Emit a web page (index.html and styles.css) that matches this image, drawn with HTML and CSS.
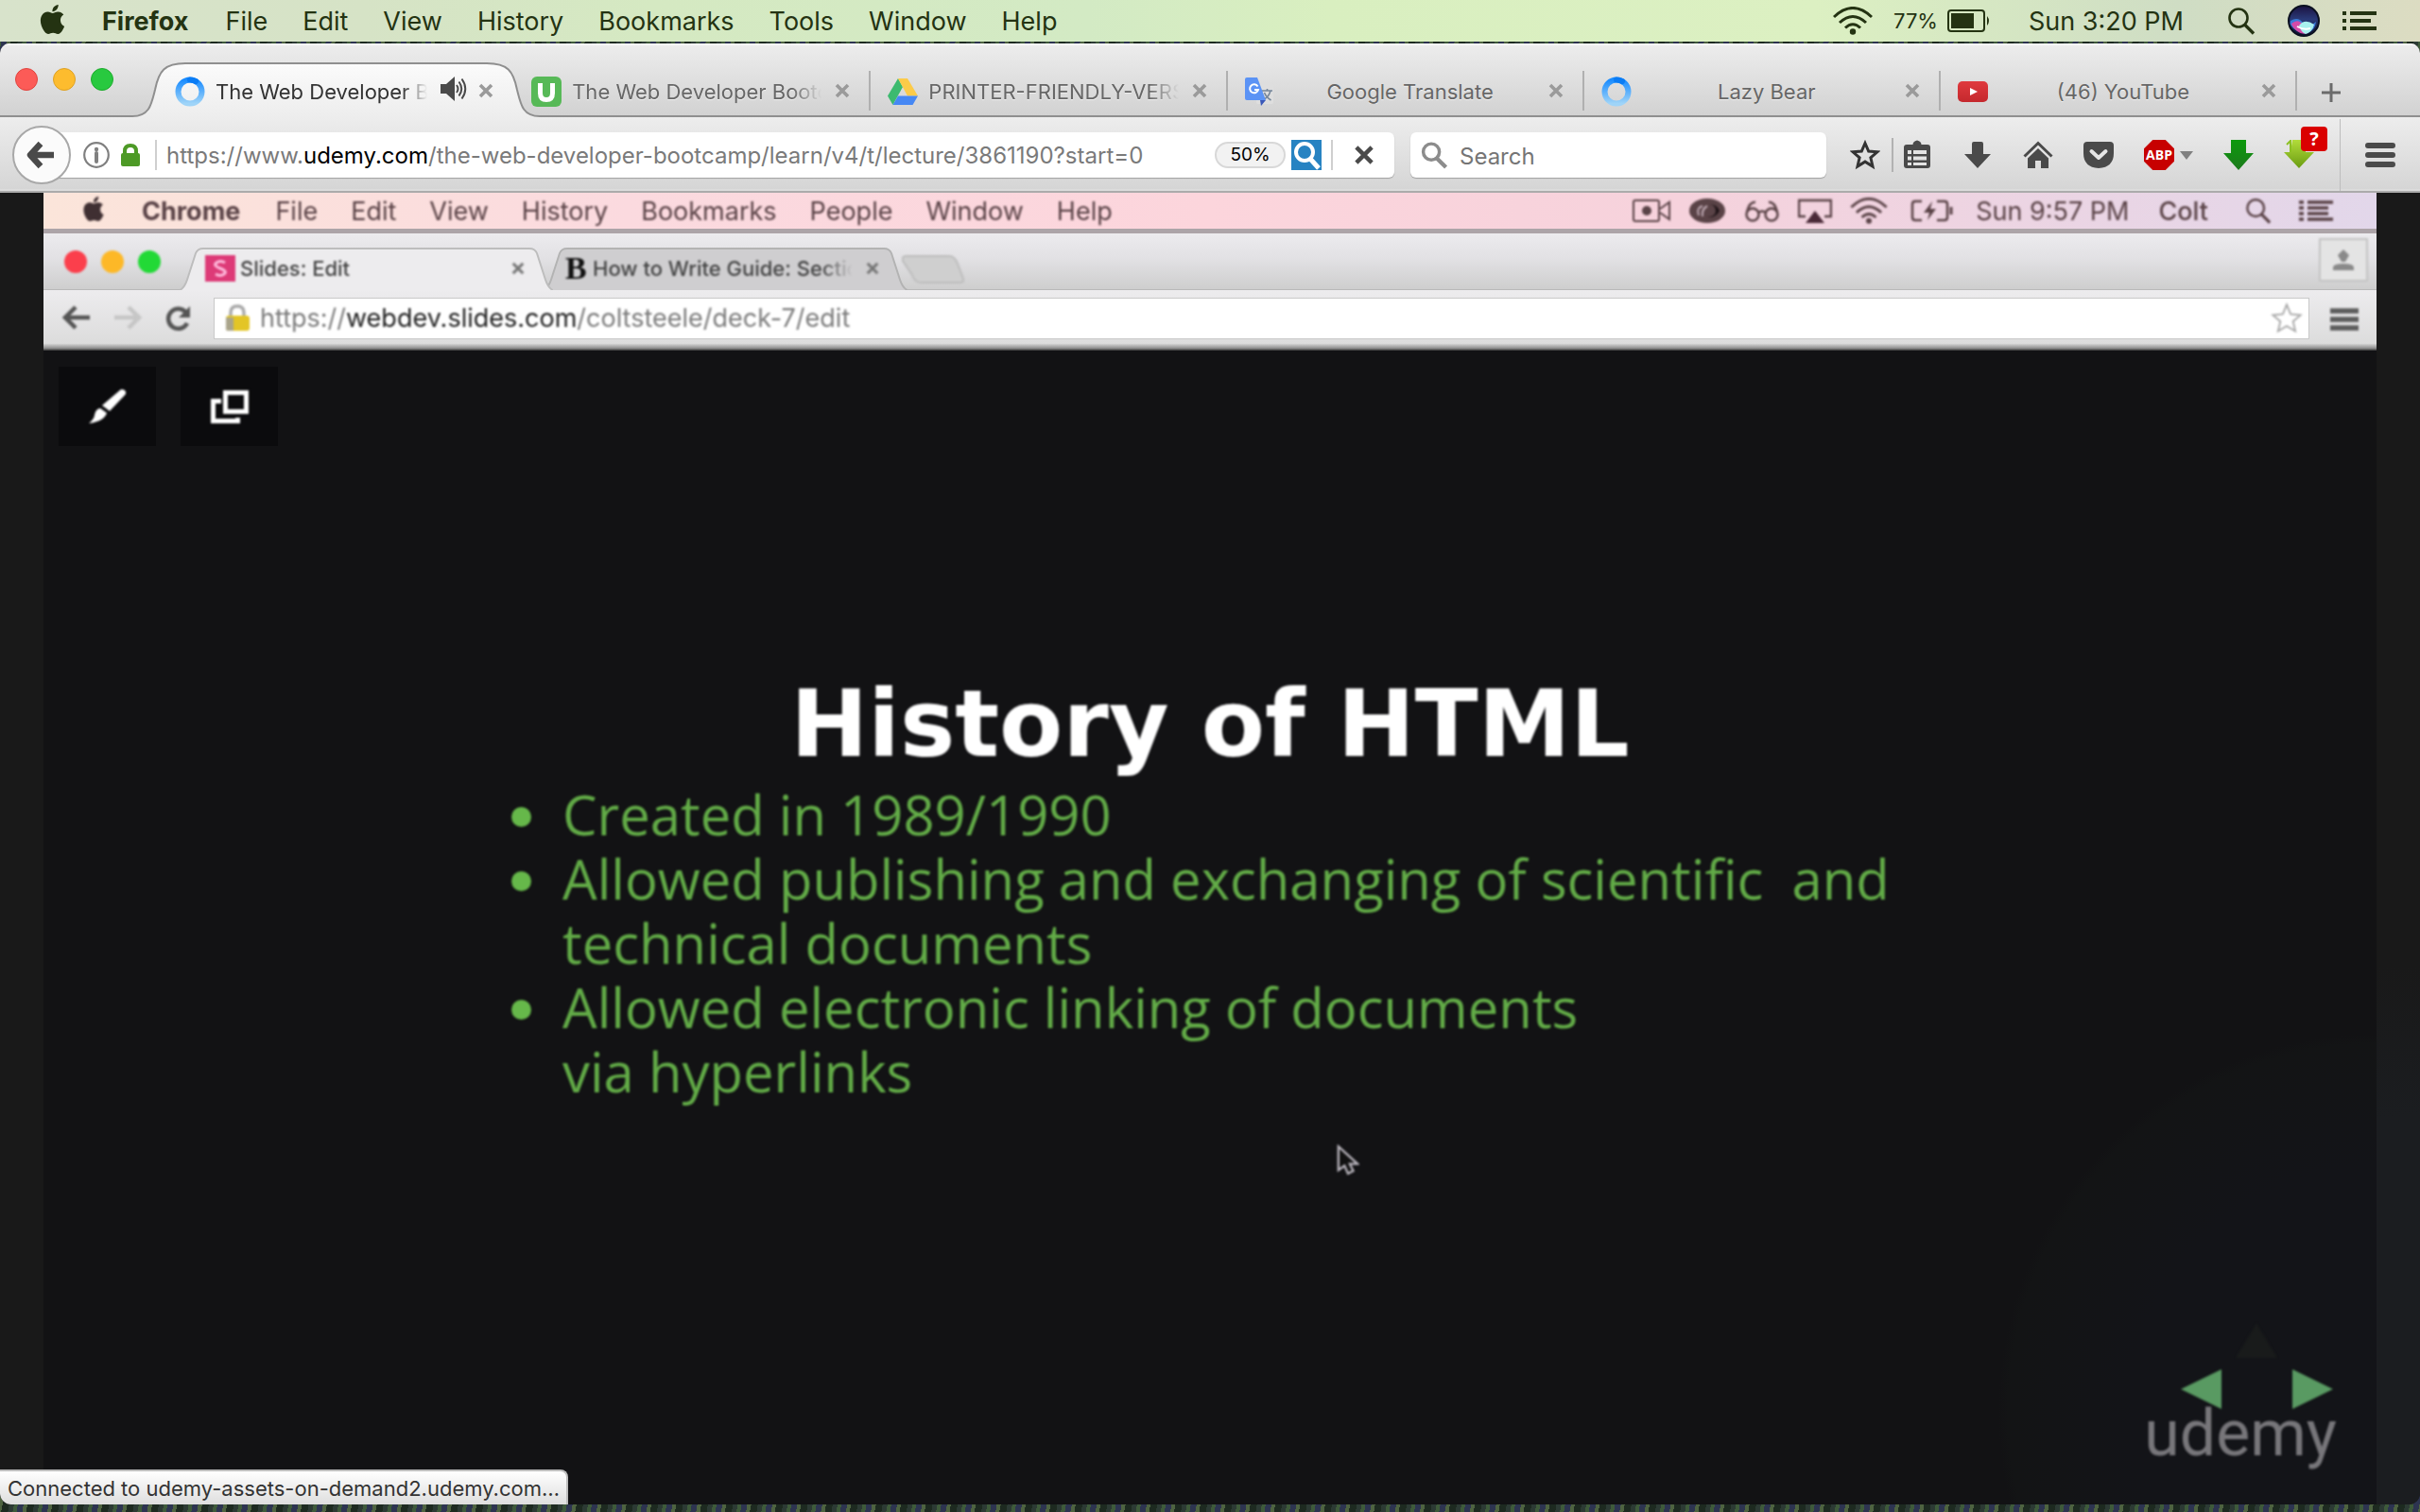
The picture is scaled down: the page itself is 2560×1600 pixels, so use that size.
FILE: index.html
```
<!DOCTYPE html>
<html lang="en">
<head>
<meta charset="utf-8">
<title>The Web Developer Bootcamp</title>
<link rel="stylesheet" href="styles.css">
</head>
<body>
<svg class="defs" width="0" height="0" aria-hidden="true">
  <defs>
    <linearGradient id="spin" x1="0" y1="0" x2="0" y2="1"><stop offset="0" stop-color="#1a8cff"/><stop offset="1" stop-color="#9fd4f8"/></linearGradient>
    <linearGradient id="lime" x1="0" y1="0" x2="0" y2="1"><stop offset="0" stop-color="#b2dc3a"/><stop offset="1" stop-color="#6a9c12"/></linearGradient>
    <linearGradient id="green" x1="0" y1="0" x2="0" y2="1"><stop offset="0" stop-color="#0c9a0c"/><stop offset="1" stop-color="#1d7a1d"/></linearGradient>
    <linearGradient id="siri" x1="0" y1="0" x2="0" y2="1"><stop offset="0" stop-color="#1b1240"/><stop offset=".45" stop-color="#2a3a78"/><stop offset="1" stop-color="#0b1230"/></linearGradient>
    <linearGradient id="tabfill" x1="0" y1="0" x2="0" y2="1"><stop offset="0" stop-color="#fbfbfb"/><stop offset="1" stop-color="#ededed"/></linearGradient>
    <linearGradient id="youtube" x1="0" y1="0" x2="0" y2="1"><stop offset="0" stop-color="#e03a3e"/><stop offset="1" stop-color="#c4282d"/></linearGradient>
    <symbol id="apple" viewBox="0 0 24 24"><path fill="currentColor" d="M12.152 6.896c-.948 0-2.415-1.078-3.96-1.04-2.04.027-3.91 1.183-4.961 3.014-2.117 3.675-.546 9.103 1.519 12.09 1.013 1.454 2.208 3.09 3.792 3.039 1.52-.065 2.09-.987 3.935-.987 1.831 0 2.35.987 3.96.948 1.637-.026 2.676-1.48 3.676-2.948 1.156-1.688 1.636-3.325 1.662-3.415-.039-.013-3.182-1.221-3.22-4.857-.026-3.04 2.48-4.494 2.597-4.559-1.429-2.09-3.623-2.324-4.39-2.376-2-.156-3.675 1.09-4.61 1.09zM15.53 3.83c.843-1.012 1.4-2.427 1.245-3.83-1.207.052-2.662.805-3.532 1.818-.78.896-1.454 2.338-1.273 3.714 1.338.104 2.715-.688 3.559-1.701"/></symbol>
    <symbol id="wifi" viewBox="0 0 42 30"><g fill="none" stroke="currentColor" stroke-width="3"><path d="M1 11Q21-8 41 11"/><path d="M7 17Q21 4 35 17"/><path d="M13 22.500Q21 15 29 22.500"/></g><circle cx="21" cy="26.500" r="3.200" fill="currentColor"/></symbol>
    <symbol id="search" viewBox="0 0 30 30"><circle cx="12" cy="12" r="9.500" fill="none" stroke="currentColor" stroke-width="2.600"/><path d="M18.500 19l9.500 9.500" stroke="currentColor" stroke-width="3.400"/></symbol>
    <symbol id="close" viewBox="0 0 16 16"><path d="M2 2l12 12M14 2L2 14" stroke="currentColor" stroke-width="3.600" fill="none"/></symbol>
    <symbol id="spinner" viewBox="0 0 32 32"><circle cx="16" cy="16" r="12.500" fill="none" stroke="url(#spin)" stroke-width="6"/><path d="M16 3.500a12.500 12.500 0 0 1 6 1.500" fill="none" stroke="#0a7cf5" stroke-width="6" stroke-linecap="round"/></symbol>
    <symbol id="star" viewBox="0 0 32 32"><path d="M16 3.500l3.700 8.500 9.200.8-7 6 2.100 9.200-8-4.900-8 4.900 2.100-9.200-7-6 9.200-.8z" fill="none" stroke="currentColor" stroke-width="3" stroke-linejoin="miter"/></symbol>
  </defs>
</svg>

<header class="menubar">
  <nav class="menus" aria-label="Application menu">
    <button class="menu logo" aria-label="Apple menu"><svg width="31" height="31"><use href="#apple"/></svg></button>
    <button class="menu app">Firefox</button>
    <button class="menu">File</button>
    <button class="menu">Edit</button>
    <button class="menu">View</button>
    <button class="menu">History</button>
    <button class="menu">Bookmarks</button>
    <button class="menu">Tools</button>
    <button class="menu">Window</button>
    <button class="menu">Help</button>
  </nav>
  <div class="status-items">
    <svg width="42" height="30"><use href="#wifi"/></svg>
    <span class="battery">77%
      <svg width="46" height="24" viewBox="0 0 46 24"><rect x="1" y="1" width="38" height="22" rx="3" fill="none" stroke="currentColor" stroke-width="2"/><rect x="4" y="4" width="24" height="16" fill="currentColor"/><path d="M42 7q4 5 0 10z" fill="currentColor"/></svg>
    </span>
    <time class="clock">Sun 3:20 PM</time>
    <svg class="spotlight" width="30" height="30"><use href="#search"/></svg>
    <svg class="siri" width="34" height="34" viewBox="0 0 34 34"><circle cx="17" cy="17" r="16" fill="url(#siri)" stroke="#0b1020" stroke-width="2"/><path d="M3 17q8-5 13 2t14-1q-1 8-7 11T9 27 3 17z" fill="#3a7ad8"/><path d="M4 20q7-6 12 1t5 9q-6 2-11-2t-6-8z" fill="#d44aa8"/><path d="M12 22q6-8 16-1-2 8-9 10-5-2-7-9z" fill="#a8f0ee"/><path d="M10 23q7 4 14 2" stroke="#fff" stroke-width="2" fill="none"/></svg>
    <svg width="36" height="22" viewBox="0 0 36 22"><path d="M8 3h28M8 11h22M8 19h28M0 3h4M0 11h4M0 19h4" stroke="currentColor" stroke-width="4"/></svg>
  </div>
</header>

<main class="window">
  <div class="tabstrip">
    <div class="lights"><button class="light red" aria-label="Close window"></button><button class="light amber" aria-label="Minimise"></button><button class="light lime" aria-label="Zoom"></button></div>
    <div class="tabs" role="tablist">
      <div class="tab active" role="tab" aria-selected="true">
        <div class="tab-shape">
          <svg width="56" height="58" viewBox="0 0 56 58"><path d="M0 58V57C18 57 20 45 24 29 28 9 34 1 56 1V58z" fill="url(#tabfill)"/><path d="M0 57C18 57 20 45 24 29 28 9 34 1 56 1" fill="none" stroke="#8f8f8f" stroke-width="2"/></svg>
          <div class="tab-mid"></div>
          <svg width="56" height="58" viewBox="0 0 56 58"><path d="M56 58V57C38 57 36 45 32 29 28 9 22 1 0 1V58z" fill="url(#tabfill)"/><path d="M56 57C38 57 36 45 32 29 28 9 22 1 0 1" fill="none" stroke="#8f8f8f" stroke-width="2"/></svg>
        </div>
        <svg class="favicon" width="32" height="32"><use href="#spinner"/></svg>
        <span class="tab-title fade">The Web Developer Bootcamp</span>
        <svg class="sound" width="28" height="26" viewBox="0 0 28 26"><path d="M0 8h6l9-8v26l-9-8H0z" fill="#4a4a4a"/><path d="M17 9q3 4 0 8M19.500 5.500q5.500 7.500 0 15M22.500 2.500q7.500 10.500 0 21" fill="none" stroke="#4a4a4a" stroke-width="2"/></svg>
        <button class="tab-close" aria-label="Close tab"><svg width="16" height="16"><use href="#close"/></svg></button>
      </div>
      <div class="tab" role="tab">
        <svg class="favicon" width="32" height="32" viewBox="0 0 32 32"><rect width="32" height="32" rx="6" fill="#57b957"/><path d="M9.500 7v10.500q0 7 6.500 7t6.500-7V7" fill="none" stroke="#fff" stroke-width="5"/></svg>
        <span class="tab-title fade">The Web Developer Bootcamp</span>
        <button class="tab-close" aria-label="Close tab"><svg width="16" height="16"><use href="#close"/></svg></button>
      </div>
      <div class="tab" role="tab">
        <svg class="favicon" width="32" height="32" viewBox="0 0 32 32"><path d="M11 2L0 20.500 5.500 30 16 11z" fill="#3cba6f"/><path d="M11 2h10l11 18.500H21z" fill="#fccb49"/><path d="M5.500 30L11 20.500h21L26.500 30z" fill="#4688f4"/></svg>
        <span class="tab-title fade">PRINTER-FRIENDLY-VERSION</span>
        <button class="tab-close" aria-label="Close tab"><svg width="16" height="16"><use href="#close"/></svg></button>
      </div>
      <div class="tab" role="tab">
        <svg class="favicon" width="32" height="32" viewBox="0 0 32 32"><rect x="12" y="7" width="18" height="22" rx="2" fill="#dedede"/><path d="M18 15h11M23.500 13v2M27 15q-2 7-7 9M20.500 17q2 5 7 8" stroke="#75869a" stroke-width="1.600" fill="none"/><path d="M16 25h6l-5 6z" fill="#3a58b8"/><path d="M2 1h11l9 24H2q-2 0-2-2V3q0-2 2-2z" fill="#5b93f5"/><path d="M13.500 10.500A4.500 4.500 0 1 0 14 14H10" fill="none" stroke="#fff" stroke-width="2"/></svg>
        <span class="tab-title">Google Translate</span>
        <button class="tab-close" aria-label="Close tab"><svg width="16" height="16"><use href="#close"/></svg></button>
      </div>
      <div class="tab" role="tab">
        <svg class="favicon" width="32" height="32"><use href="#spinner"/></svg>
        <span class="tab-title">Lazy Bear</span>
        <button class="tab-close" aria-label="Close tab"><svg width="16" height="16"><use href="#close"/></svg></button>
      </div>
      <div class="tab" role="tab">
        <svg class="favicon" width="32" height="32" viewBox="0 0 32 32"><rect y="5" width="32" height="22" rx="5" fill="url(#youtube)"/><path d="M13 12l8 4-8 4z" fill="#fff"/></svg>
        <span class="tab-title">(46) YouTube</span>
        <button class="tab-close" aria-label="Close tab"><svg width="16" height="16"><use href="#close"/></svg></button>
      </div>
    </div>
    <button class="new-tab" aria-label="New tab"><svg width="20" height="20" viewBox="0 0 20 20"><path d="M10 0v20M0 10h20" stroke="#6b6b6b" stroke-width="3"/></svg></button>
  </div>

  <div class="toolbar">
    <button class="back" aria-label="Back"><svg width="32" height="32" viewBox="0 0 32 32"><path d="M15 4L4 16l11 12M5 16h24" fill="none" stroke="#4a4a4a" stroke-width="6.500" stroke-linejoin="round" stroke-linecap="butt"/></svg></button>
    <div class="urlbar">
      <svg width="28" height="28" viewBox="0 0 28 28"><circle cx="14" cy="14" r="12.800" fill="none" stroke="#808080" stroke-width="2.200"/><circle cx="14" cy="8" r="2.200" fill="#808080"/><path d="M14 12v9" stroke="#808080" stroke-width="4" stroke-linecap="round"/></svg>
      <svg class="lock" width="20" height="24" viewBox="0 0 20 24"><rect y="10" width="20" height="14" rx="2" fill="#4d9a26"/><path d="M4 12V8q0-6 6-6t6 6v4" fill="none" stroke="#4d9a26" stroke-width="4"/></svg>
      <div class="url" role="textbox" contenteditable="true" spellcheck="false" aria-label="Address">https://www.<b>udemy.com</b>/the-web-developer-bootcamp/learn/v4/t/lecture/3861190?start=0</div>
      <button class="zoom-level">50%</button>
      <svg width="32" height="32" viewBox="0 0 32 32"><rect width="32" height="32" fill="#2783c2"/><circle cx="14" cy="13" r="9" fill="none" stroke="#fff" stroke-width="4"/><path d="M20 20l9 10" stroke="#fff" stroke-width="5"/></svg>
      <button class="stop" aria-label="Stop"><svg width="20" height="20" viewBox="0 0 16 16"><path d="M1.500 1.500l13 13M14.500 1.500l-13 13" stroke="#4a4a4a" stroke-width="3.600"/></svg></button>
    </div>
    <label class="searchbox">
      <svg width="29" height="29" viewBox="0 0 30 30"><circle cx="11.500" cy="11" r="8.800" fill="none" stroke="#8c8c8c" stroke-width="3.600"/><path d="M17.500 18l10 10" stroke="#8c8c8c" stroke-width="4.400"/></svg>
      <input type="search" placeholder="Search" aria-label="Search">
    </label>
    <button class="tool star" aria-label="Bookmark this page"><svg width="32" height="32"><use href="#star"/></svg></button>
    <div class="tools">
      <button class="tool" aria-label="Bookmarks list"><svg width="32" height="32" viewBox="0 0 32 32"><path d="M5 5h6.500q0-3.500 4.500-4.500 4.500 1 4.500 4.500H27q3 0 3 3v19q0 3-3 3H5q-3 0-3-3V8q0-3 3-3z" fill="#4a4a4a"/><path d="M6 11h4v4H6zM12 11h14v4H12zM6 17.500h4v4H6zM12 17.500h14v4H12zM6 24h4v3H6zM12 24h14v3H12z" fill="#e4e4e4"/></svg></button>
      <button class="tool" aria-label="Downloads"><svg width="32" height="32" viewBox="0 0 32 32"><path d="M10 4q0-2 2-2h8q2 0 2 2v11h8L16 30 2 15h8z" fill="#4a4a4a"/></svg></button>
      <button class="tool" aria-label="Home"><svg width="32" height="32" viewBox="0 0 32 32"><path d="M1.500 17.500L16 3.500l14.500 14" fill="none" stroke="#4a4a4a" stroke-width="3"/><path d="M5 19.500L16 9l11 10.500V30h-8v-8h-6v8H5z" fill="#4a4a4a"/></svg></button>
      <button class="tool" aria-label="Pocket"><svg width="32" height="32" viewBox="0 0 32 32"><path d="M4 2h24q4 0 4 4v8q0 15-16 16Q0 29 0 14V6q0-4 4-4z" fill="#4a4a4a"/><path d="M8.500 12l7.500 7 7.500-7" fill="none" stroke="#e6e6e6" stroke-width="4" stroke-linecap="round" stroke-linejoin="round"/></svg></button>
      <button class="tool abp" aria-label="Adblock Plus"><span class="abp-sign">ABP</span><svg width="14" height="9" viewBox="0 0 14 9"><path d="M0 0h14L7 9z" fill="#808080"/></svg></button>
      <button class="tool" aria-label="Video download"><svg width="32" height="32" viewBox="0 0 32 32"><path d="M8 0h16v14h8L16 32 0 14h8z" fill="url(#green)"/></svg></button>
      <button class="tool badged" aria-label="Download helper"><svg width="32" height="32" viewBox="0 0 32 32"><path d="M9 0h14v13h9L16 30 0 13h7z" fill="url(#lime)"/><path d="M3 5l4-4v12" fill="none" stroke="#8cc024" stroke-width="2"/></svg><span class="badge">?</span></button>
    </div>
    <div class="burger-cell"><button class="tool" aria-label="Open menu"><svg width="32" height="26" viewBox="0 0 32 26"><path d="M3 3h26M3 13h26M3 23h26" stroke="#4a4a4a" stroke-width="6" stroke-linecap="round"/></svg></button></div>
  </div>

  <section class="page">
    <div class="recording">
      <div class="rec-menubar">
        <div class="rec-menus soft">
          <svg class="rec-apple" width="26" height="26"><use href="#apple"/></svg>
          <span class="rec-app">Chrome</span><span>File</span><span>Edit</span><span>View</span><span>History</span><span>Bookmarks</span><span>People</span><span>Window</span><span>Help</span>
        </div>
        <div class="rec-status soft">
          <svg width="40" height="24" viewBox="0 0 40 24"><rect x="1" y="1" width="27" height="22" rx="2" fill="none" stroke="currentColor" stroke-width="2"/><circle cx="15" cy="12" r="5" fill="currentColor"/><path d="M29 10l10-7v18l-10-7" fill="none" stroke="currentColor" stroke-width="2"/></svg>
          <svg width="40" height="28" viewBox="0 0 40 28"><ellipse cx="20" cy="14" rx="19" ry="13" fill="currentColor"/><path d="M11 19q-3-8 4-10M15 20q-1-8 5-11" fill="none" stroke="#bfaab4" stroke-width="2"/><path d="M20 21q9-1 9-7t-7-7q8 0 11 7-4 8-13 7z" fill="#1c1216"/></svg>
          <svg width="38" height="24" viewBox="0 0 38 24"><g fill="none" stroke="currentColor" stroke-width="2.500"><circle cx="9" cy="16" r="6.500"/><circle cx="29" cy="16" r="6.500"/><path d="M15 14q4-3 8 0M3 13Q6 2 12 3M35 13Q32 2 26 3"/></g></svg>
          <svg width="36" height="26" viewBox="0 0 36 26"><path d="M8 19H1V2h34v17h-7" fill="none" stroke="currentColor" stroke-width="2.500"/><path d="M8 26L18 13l10 13z" fill="#4a2a38"/></svg>
          <svg class="rec-wifi" width="40" height="28"><use href="#wifi"/></svg>
          <svg width="46" height="24" viewBox="0 0 46 24"><path d="M12 2H5q-3 0-3 3v14q0 3 3 3h7M28 2h8q3 0 3 3v14q0 3-3 3h-8" fill="none" stroke="currentColor" stroke-width="2.500"/><path d="M43 8v8" stroke="currentColor" stroke-width="3"/><path d="M23 2l-9 12h6l-2 8 9-12h-6z" fill="currentColor"/></svg>
          <span class="rec-time">Sun 9:57 PM</span><span class="rec-user">Colt</span>
          <svg width="28" height="28"><use href="#search"/></svg>
          <svg width="36" height="22" viewBox="0 0 36 22"><path d="M9 2h27M9 8h22M9 14h22M9 20h27M0 2h5M0 8h5M0 14h5M0 20h5" stroke="currentColor" stroke-width="3.500"/></svg>
        </div>
      </div>
      <div class="rec-tabstrip">
        <div class="rec-lights soft"><i class="light rec-red"></i><i class="light rec-amber"></i><i class="light rec-green"></i></div>
        <div class="rec-tab rec-active">
          <svg class="rec-shape" width="395" height="45" viewBox="0 0 395 45"><path d="M0 45Q5 43 8 34L17 6Q19 1 25 1H370Q376 1 378 6L387 34Q390 43 395 45" fill="#edecee" stroke="#bdbdbd" stroke-width="2"/></svg>
          <svg class="soft" width="32" height="28" viewBox="0 0 32 28"><rect width="32" height="28" fill="#dd3a77"/><path d="M21 8q-5-3-9 0t4 6 4 6-9 0" fill="none" stroke="#fbd" stroke-width="3"/></svg>
          <span class="rec-title soft">Slides: Edit</span>
          <svg class="rec-x soft" width="14" height="14"><use href="#close"/></svg>
        </div>
        <div class="rec-tab">
          <svg class="rec-shape" width="385" height="45" viewBox="0 0 385 45"><path d="M0 45Q5 43 8 34L17 6Q19 1 25 1H360Q366 1 368 6L377 34Q380 43 385 45" fill="#cfced0" stroke="#b3b3b3" stroke-width="2"/></svg>
          <span class="rec-b soft">B</span>
          <span class="rec-title fade soft">How to Write Guide: Section</span>
          <svg class="rec-x soft" width="14" height="14"><use href="#close"/></svg>
        </div>
        <svg class="rec-new soft" width="66" height="30" viewBox="0 0 66 30"><path d="M4 1h46q6 0 9 8l6 16q1 4-4 4H20q-6 0-9-8L1 6q-1-5 3-5z" fill="#cfcfcf" stroke="#bdbdbd" stroke-width="2"/></svg>
        <div class="rec-profile soft"><svg width="24" height="24" viewBox="0 0 24 24"><path d="M12 1l6 6-4 7h-4L6 7z" fill="#8a8a8a"/><path d="M1 23v-3q0-4 11-4t11 4v3z" fill="#8a8a8a"/></svg></div>
      </div>
      <div class="rec-toolbar">
        <div class="rec-nav soft">
          <svg width="30" height="26" viewBox="0 0 30 26"><path d="M14 2L3 13l11 11M3 13h26" fill="none" stroke="#555" stroke-width="4.500"/></svg>
          <svg width="30" height="26" viewBox="0 0 30 26"><path d="M16 2l11 11-11 11M27 13H1" fill="none" stroke="#c6c6c6" stroke-width="4.500"/></svg>
          <svg width="28" height="28" viewBox="0 0 28 28"><path d="M23 8A10.500 10.500 0 1 0 24 19" fill="none" stroke="#555" stroke-width="4.500"/><path d="M27 1v12H15z" fill="#555"/></svg>
        </div>
        <div class="rec-url">
          <svg class="soft" width="27" height="29" viewBox="0 0 27 29"><path d="M6 14V9q0-7 7-7t7 7v5" fill="none" stroke="#aaa" stroke-width="3.500"/><rect x="1" y="12" width="25" height="16" rx="3" fill="#e3c526"/><path d="M1 14h8v14H3q-2 0-2-2z" fill="#a9a48a"/></svg>
          <span class="rec-address soft">https://<b>webdev.slides.com</b>/coltsteele/deck-7/edit</span>
          <svg class="soft" width="36" height="36" viewBox="0 0 32 32"><path d="M16 3l3.700 9 9.300.8-7 6 2.100 9.200-8.100-4.900L7.900 28l2.100-9.200-7-6 9.300-.8z" fill="#fff" stroke="#a5a5a5" stroke-width="1.600"/></svg>
        </div>
        <svg class="soft" width="30" height="26" viewBox="0 0 30 26"><path d="M0 5h30M0 14h30M0 23h30" stroke="#5c5c5c" stroke-width="5.500"/></svg>
      </div>

      <article class="slide">
        <div class="slide-tools">
          <button class="slide-tool" aria-label="Style"><svg class="soft" width="42" height="38" viewBox="0 0 42 38"><path d="M35 1q6 0 5 5L23 24l-8-6z" fill="#fff"/><path d="M13 21l7 5q-3 9-19 11 6-5 6-9 1-6 6-7z" fill="#fff"/></svg></button>
          <button class="slide-tool" aria-label="Arrange"><svg class="soft" width="42" height="38" viewBox="0 0 42 38"><rect x="3.500" y="13.500" width="26" height="21" fill="#0b0b0d" stroke="#fff" stroke-width="5"/><rect x="12" y="1" width="30" height="30" fill="#0b0b0d"/><rect x="16.500" y="4.500" width="22" height="20" fill="#0b0b0d" stroke="#fff" stroke-width="5"/></svg></button>
        </div>
        <h1 class="slide-title soft">History of HTML</h1>
        <ul class="points soft">
          <li>Created in 1989/1990</li>
          <li>Allowed publishing and exchanging of scientific&nbsp; and technical documents</li>
          <li>Allowed electronic linking of documents<br>via hyperlinks</li>
        </ul>
        <svg class="cursor soft" width="24" height="34" viewBox="0 0 26 36"><path d="M2 2v27l7-5 4 9 6-3-4-8h9z" fill="#111" stroke="#b9b5bd" stroke-width="2.500"/></svg>
        <div class="corner">
          <svg class="soft" width="164" height="94" viewBox="0 0 164 94"><path d="M81 1l22 37H59z" fill="#191b1b"/><path d="M1 71l43-21v42z" fill="#599a62"/><path d="M162 71l-43-21v42z" fill="#599a62"/></svg>
          <span class="brand soft">udemy</span>
        </div>
      </article>
    </div>
    <output class="status">Connected to udemy-assets-on-demand2.udemy.com…</output>
  </section>
</main>
</body>
</html>
```
FILE: styles.css
```
* { box-sizing: border-box; }

body {
  margin: 0;
  min-height: 100vh;
  display: flex;
  flex-direction: column;
  overflow-x: hidden;
  padding-bottom: 8px;
  font-family: Inter, "Liberation Sans", sans-serif;
  color: #333;
  background: repeating-linear-gradient(100deg, #2c3a34 0 5px, #3e5a3a 5px 9px, #2d3450 9px 15px, #4e6340 15px 19px, #1d2a20 19px 26px);
}

.defs { position: absolute; }
svg { display: block; flex: none; }

button {
  margin: 0;
  padding: 0;
  border: 0;
  background: none;
  font: inherit;
  color: inherit;
}

.soft { filter: blur(1px); }

/* System menu bar */
.menubar {
  display: flex;
  align-items: center;
  justify-content: space-between;
  height: 44px;
  padding: 0 46px 0 40px;
  color: #243312;
  font-size: 27px;
  background: linear-gradient(90deg, #d8e3cb 0, #d6e3c6 15%, #d5e9c2 27%, #d3eac4 45%, #d9efc0 55%, #dcf0c2 75%, #cfddc4 90%, #dcdcc2 100%);
}
.menus { display: flex; align-items: center; gap: 37px; }
.logo { margin: 0 0 4px; }
.app { font-weight: 700; margin-right: 2px; }
.status-items { display: flex; align-items: center; }
.battery { display: flex; align-items: center; gap: 10px; margin-left: 22px; font-size: 22px; }
.clock { margin: 0 46px 0 40px; }
.siri { margin: 0 24px 0 34px; }

/* Browser window */
.window {
  flex: 1;
  display: flex;
  flex-direction: column;
  margin-top: 2px;
  border-radius: 10px 10px 12px 12px;
  overflow: hidden;
  background: #191919;
}

.tabstrip {
  display: flex;
  align-items: flex-end;
  height: 78px;
  background: linear-gradient(#ededed, #e2e2e2 40%, #d1d1d1);
  box-shadow: inset 0 2px #f8f8f8, inset 0 -2px #8f8f8f;
}
.lights { display: flex; gap: 16px; width: 166px; padding: 0 0 28px 16px; }
.light { display: block; width: 24px; height: 24px; border-radius: 50%; }
.red { background: #fc5b57; border: 1px solid #e0443e; }
.amber { background: #fdbc2e; border: 1px solid #dea123; }
.lime { background: #28c93f; border: 1px solid #1dab2c; }

.tabs { flex: 1; display: flex; min-width: 0; }
.tab {
  position: relative;
  flex: 1 1 0;
  min-width: 0;
  display: flex;
  align-items: center;
  height: 58px;
  padding: 4px 21px 0 19px;
  font-size: 22px;
  color: #666;
  text-shadow: 0 1px #f0f0f0;
}
.tab:not(.active)::after {
  content: "";
  position: absolute;
  right: -1px;
  top: 9px;
  width: 2px;
  height: 42px;
  background: #b0b0b0;
}
.tab.active { z-index: 1; color: #333; }
.tab-shape { position: absolute; z-index: -1; left: -26px; right: -28px; top: 0; display: flex; }
.tab-mid { flex: 1; height: 58px; border-top: 2px solid #8f8f8f; background: linear-gradient(#fbfbfb, #ededed); }
.tab-title {
  flex: 1;
  min-width: 0;
  margin: 0 14px 0 11px;
  overflow: hidden;
  white-space: nowrap;
  text-align: center;
}
.fade {
  text-align: left;
  -webkit-mask-image: linear-gradient(90deg, #000 88%, transparent);
  mask-image: linear-gradient(90deg, #000 88%, transparent);
}
.sound { margin: -6px 12px 0 0; }
.tab-close { color: #9a9a9a; margin-bottom: 3px; }
.new-tab { width: 131px; padding: 0 0 16px 27px; }

.toolbar {
  display: flex;
  align-items: center;
  height: 80px;
  padding-left: 13px;
  background: linear-gradient(#ededed, #d4d4d4);
  box-shadow: inset 0 -2px #ababab, inset 0 -4px #dcdcdc;
}
.back {
  z-index: 1;
  display: grid;
  place-items: center;
  width: 62px;
  height: 62px;
  border: 2px solid #a8a8a8;
  border-radius: 50%;
  background: #fbfbfb;
}
.urlbar, .searchbox {
  display: flex;
  align-items: center;
  height: 48px;
  background: #fff;
  border-radius: 6px;
  box-shadow: 0 1px 1px #9f9f9f;
}
.urlbar { flex: 1; min-width: 0; margin-left: -31px; padding-left: 44px; }
.lock { margin: 0 16px 0 12px; }
.url {
  flex: 1;
  min-width: 0;
  height: 32px;
  padding-left: 10px;
  border-left: 2px solid #cfcfcf;
  overflow: hidden;
  white-space: nowrap;
  font-size: 24px;
  line-height: 34px;
  color: #7a7a7a;
}
.url b { font-weight: 400; color: #000; }
.zoom-level {
  width: 75px;
  height: 28px;
  margin-right: 6px;
  border: 2px solid #d8d8d8;
  border-radius: 14px;
  background: #f2f2f2;
  font-size: 19px;
  line-height: 24px;
  color: #000;
}
.stop {
  display: grid;
  place-items: center;
  width: 67px;
  height: 32px;
  margin-left: 10px;
  border-left: 2px solid #cfcfcf;
}
.searchbox { width: 440px; margin-left: 17px; padding-left: 11px; gap: 12px; }
.searchbox input {
  flex: 1;
  min-width: 0;
  padding: 2px 0 0;
  border: 0;
  background: none;
  font: 24px Inter, "Liberation Sans", sans-serif;
}
.searchbox input::placeholder { color: #757575; opacity: 1; }
.star { padding: 0 12px 0 25px; }
.tools {
  display: flex;
  align-items: center;
  gap: 32px;
  height: 36px;
  padding: 0 27px 0 9px;
  border-left: 2px solid #b2b2b2;
}
.abp { display: flex; align-items: center; gap: 6px; }
.abp-sign {
  width: 32px;
  height: 32px;
  background: #c70000;
  clip-path: polygon(29% 0, 71% 0, 100% 29%, 100% 71%, 71% 100%, 29% 100%, 0 71%, 0 29%);
  color: #fff;
  font: 700 14px/32px "Open Sans", sans-serif;
  text-align: center;
}
.badged { position: relative; }
.badge {
  position: absolute;
  left: 18px;
  top: -14px;
  width: 28px;
  height: 26px;
  border-radius: 4px;
  background: #da0000;
  color: #fff;
  font: 700 20px/26px "Open Sans", sans-serif;
}
.burger-cell { display: grid; place-items: center; width: 85px; height: 76px; border-left: 1px solid #bdbdbd; }

/* Web page with the lecture video */
.page {
  position: relative;
  flex: 1;
  display: flex;
  padding: 0 46px;
  background: radial-gradient(circle at 100% 92%, #1b1d20 0 300px, #191919 460px);
}
.recording { flex: 1; min-width: 0; display: flex; flex-direction: column; background: #131315; }

.rec-menubar {
  display: flex;
  align-items: center;
  justify-content: space-between;
  height: 43px;
  padding: 0 46px 6px 40px;
  border-bottom: 5px solid #aca4a8;
  font-size: 27px;
  color: #5a4347;
  background: linear-gradient(90deg, #fbe5da, #fbdadf 25%, #fcd5dc 50%, #f6d2dc 70%, #e2d7ea);
}
.rec-menus, .rec-status { display: flex; align-items: center; padding-top: 6px; }
.rec-menus { gap: 35px; }
.rec-apple { margin: 0 3px 4px 0; color: #3f2f32; }
.rec-app { font-weight: 700; margin-right: 2px; }
.rec-status { gap: 19px; }
.rec-wifi { margin-right: 5px; }
.rec-time { margin-left: 4px; }
.rec-user { margin: 0 20px 0 12px; font-weight: 500; }
.rec-status svg:last-child { margin-left: 10px; }

.rec-tabstrip {
  display: flex;
  align-items: flex-end;
  height: 60px;
  padding-left: 22px;
  background: linear-gradient(#ecebee, #e2e1e4 45%, #cecece);
  border-bottom: 1px solid #b9b9b9;
}
.rec-lights { display: flex; gap: 15px; width: 122px; padding-bottom: 17px; }
.rec-red { background: #fb3f4c; }
.rec-amber { background: #fdb827; }
.rec-green { background: #22d936; }
.rec-tab {
  position: relative;
  display: flex;
  align-items: center;
  width: 385px;
  height: 44px;
  margin-left: -10px;
  padding: 0 30px 0 23px;
  font-size: 22px;
  font-weight: 500;
  color: #444;
}
.rec-active { z-index: 1; width: 395px; margin-left: 0; padding-left: 27px; }
.rec-shape { position: absolute; z-index: -1; left: 0; top: 0; }
.rec-tab:not(.rec-active) { z-index: 0; }
.rec-title { flex: 1; min-width: 0; margin: 0 14px 0 5px; overflow: hidden; white-space: nowrap; }
.rec-b { width: 24px; font: 700 34px/34px "Liberation Serif", serif; color: #111; }
.rec-x { color: #777; }
.rec-new { margin: 0 auto 6px -6px; }
.rec-profile {
  display: grid;
  place-items: center;
  width: 52px;
  height: 46px;
  margin: 0 9px 8px 0;
  border: 2px solid #c4c4c4;
  background: #e4e4e4;
}

.rec-toolbar {
  display: flex;
  align-items: center;
  height: 64px;
  padding: 0 19px 5px 20px;
  background: linear-gradient(#edecee, #dcdcdc 88%, #8f8f8f 96%, #333);
}
.rec-nav { display: flex; gap: 24px; width: 160px; }
.rec-url {
  flex: 1;
  min-width: 0;
  display: flex;
  align-items: center;
  height: 44px;
  margin-right: 22px;
  padding: 0 5px 0 11px;
  border: 1px solid #c9c9c9;
  background: #fff;
}
.rec-address { flex: 1; margin-left: 10px; font-size: 27px; color: #7c7c7c; }
.rec-address b { font-weight: 400; color: #222; }

/* Slide shown in the recording */
.slide {
  position: relative;
  flex: 1;
  padding: 17px 16px;
  background: radial-gradient(circle at 100% 92%, #131418 0 260px, #131415 390px, #121214 400px);
}
.slide-tools { display: flex; gap: 26px; }
.slide-tool { display: grid; place-items: center; width: 103px; height: 84px; background: #0b0b0d; }
.slide-title {
  margin: 234px 0 0;
  font: 700 98px/120px "DejaVu Sans", sans-serif;
  text-align: center;
  color: #fff;
}
.points {
  max-width: 1480px;
  margin: 2px auto 0;
  padding: 0;
  list-style: none;
  font: 58px/68px "Open Sans", sans-serif;
  color: #62ab47;
}
.points li { position: relative; padding-left: 55px; }
.points li::before {
  content: "";
  position: absolute;
  left: 1px;
  top: 26px;
  width: 21px;
  height: 21px;
  border-radius: 50%;
  background: #66b84a;
}
.cursor { position: absolute; left: 1368px; top: 840px; }
.corner {
  position: absolute;
  right: 42px;
  bottom: 35px;
  display: flex;
  flex-direction: column;
  align-items: flex-end;
}
.corner svg { margin-right: 2px; }
.brand { margin-top: -16px; font: 400 68px/80px Roboto, sans-serif; color: #77767a; }

.status {
  position: absolute;
  left: 0;
  bottom: 0;
  height: 37px;
  padding: 0 7px 0 8px;
  border: 2px solid #bdbdbd;
  border-width: 2px 2px 0 0;
  border-radius: 0 8px 0 0;
  background: linear-gradient(#fff, #dedede);
  font-size: 22px;
  line-height: 36px;
  white-space: nowrap;
  color: #333;
}
```
